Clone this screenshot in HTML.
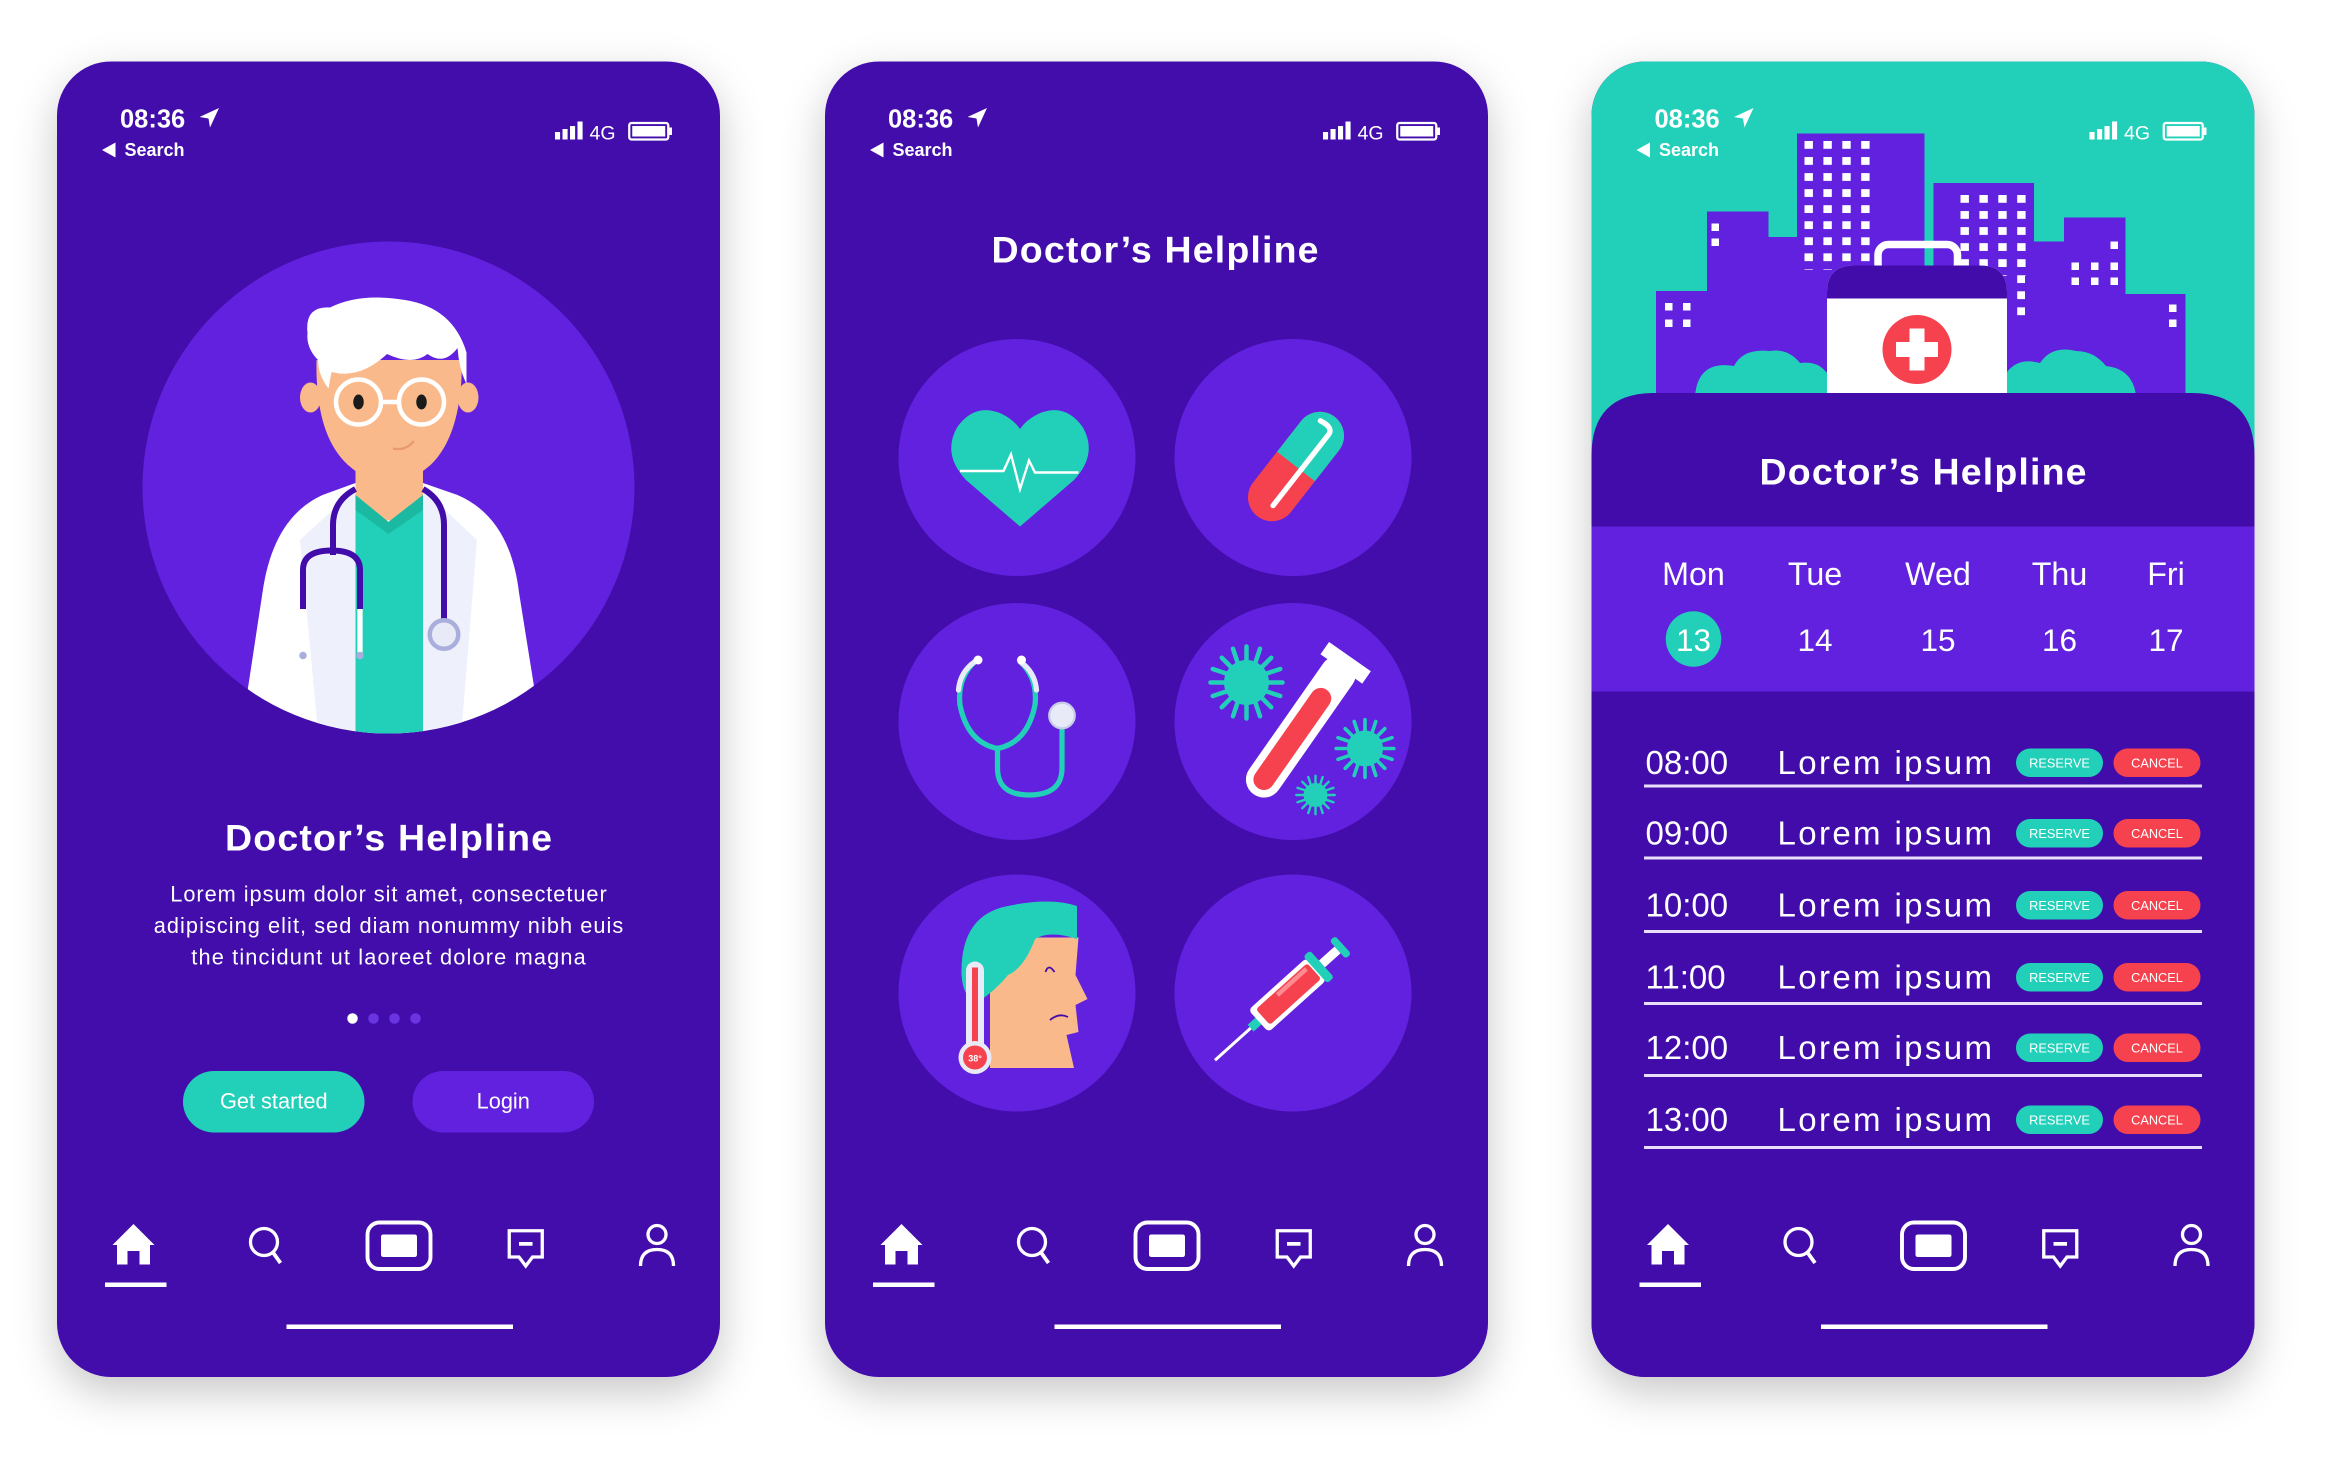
<!DOCTYPE html>
<html><head><meta charset="utf-8"><style>html,body{margin:0;padding:0;background:#fff}svg{display:block}</style></head>
<body>
<svg width="2352" height="1472" viewBox="0 0 1568 981.33" xmlns="http://www.w3.org/2000/svg" font-family="'Liberation Sans', 'DejaVu Sans', sans-serif">
<defs>
<filter id="sh" x="-20%" y="-20%" width="140%" height="140%"><feDropShadow dx="0" dy="10" stdDeviation="14" flood-color="#000" flood-opacity="0.22"/></filter>
<clipPath id="c1"><circle cx="259" cy="325" r="164"/></clipPath>
<clipPath id="p3"><rect x="1061" y="41" width="442" height="877" rx="36"/></clipPath>
<pattern id="win" x="1203" y="94" width="12.6" height="10.7" patternUnits="userSpaceOnUse"><rect width="5.6" height="5.2" fill="#fff"/></pattern>
<pattern id="win2" x="1307" y="130" width="12.6" height="10.7" patternUnits="userSpaceOnUse"><rect width="5.6" height="5.2" fill="#fff"/></pattern>
<g id="status">
<text x="80" y="85" font-size="17" font-weight="bold" fill="#fff">08:36</text>
<path d="M146 72 L133 78 L139 79 L140 85 Z" fill="#fff"/>
<path d="M68 100 L77 95 L77 105 Z" fill="#fff"/>
<text x="83" y="104" font-size="12" font-weight="bold" fill="#fff">Search</text>
<rect x="370" y="88" width="3.4" height="5" fill="#fff"/><rect x="375" y="86" width="3.4" height="7" fill="#fff"/><rect x="380" y="84" width="3.4" height="9" fill="#fff"/><rect x="385" y="81" width="3.4" height="12" fill="#fff"/>
<text x="393" y="93" font-size="13" fill="#fff">4G</text>
<rect x="419.5" y="82" width="26" height="11" rx="1.5" fill="none" stroke="#fff" stroke-width="1.5"/>
<rect x="421.5" y="84" width="22" height="7" fill="#fff"/><rect x="446" y="85" width="2" height="5" fill="#fff"/>
</g>
<g id="nav" fill="none" stroke="#fff">
<path d="M75 830 L89 816 L103 830 Z" fill="#fff" stroke="none"/>
<path d="M78 829 H100 V843 H93 V834 H85 V843 H78 Z" fill="#fff" stroke="none"/>
<rect x="70" y="855" width="41" height="3" fill="#fff" stroke="none"/>
<circle cx="176" cy="828" r="9" stroke-width="2.2"/>
<path d="M182 835 L187 842" stroke-width="2.5"/>
<rect x="245" y="815" width="42" height="31" rx="8" stroke-width="2.6"/>
<rect x="254" y="823" width="24" height="15" rx="1.5" fill="#fff" stroke="none"/>
<path d="M339.5 820.5 H361.5 V838 H355 L350.5 844 L346 838 H339.5 Z" stroke-width="2.2"/>
<rect x="346" y="828" width="9" height="2.5" fill="#fff" stroke="none"/>
<circle cx="438" cy="823" r="6" stroke-width="2.2"/>
<path d="M427 844 Q427 833 438 833 Q449 833 449 844" stroke-width="2.2"/>
<rect x="191" y="883" width="151" height="3" fill="#fff" stroke="none"/>
</g>
<g id="virus">
<circle r="10" fill="#22D0B9"/>
<g stroke="#22D0B9" stroke-width="2" stroke-linecap="round">
<path d="M0 -10 V-16 M0 10 V16 M-10 0 H-16 M10 0 H16 M7 7 L11 11 M-7 -7 L-11 -11 M7 -7 L11 -11 M-7 7 L-11 11"/>
<path d="M4 -9 L6 -15 M-4 9 L-6 15 M9 4 L15 6 M-9 -4 L-15 -6 M-4 -9 L-6 -15 M4 9 L6 15 M9 -4 L15 -6 M-9 4 L-15 6"/>
</g>
</g>
</defs>

<!-- phones -->
<rect x="38" y="41" width="442" height="877" rx="36" fill="#420CAA" filter="url(#sh)"/>
<rect x="550" y="41" width="442" height="877" rx="36" fill="#420CAA" filter="url(#sh)"/>
<rect x="1061" y="41" width="442" height="877" rx="36" fill="#420CAA" filter="url(#sh)"/>

<!-- PHONE 1 -->
<use href="#status"/>
<circle cx="259" cy="325" r="164" fill="#6221DE"/>
<g clip-path="url(#c1)">
 <path d="M156 520 L175 395 Q182 345 215 330 L237 322 H282 L305 330 Q340 345 346 395 L366 520 Z" fill="#fff"/>
 <path d="M200 360 L237 326 V520 H215 Z" fill="#EEF1FB"/>
 <path d="M318 360 L282 326 V520 H305 Z" fill="#EEF1FB"/>
 <rect x="237" y="307" width="45" height="40" fill="#F9B98A"/>
 <path d="M237 330 L259 348 L282 330 V500 H237 Z" fill="#22D0B9"/>
 <path d="M237 330 L259 348 L282 330 V340 L259 356 L237 340 Z" fill="#1BB8A2"/>
 <ellipse cx="207" cy="265" rx="7" ry="10" fill="#F9B98A"/>
 <ellipse cx="312" cy="265" rx="7" ry="10" fill="#F9B98A"/>
 <path d="M211 240 Q210 290 232 310 Q247 323 259 323 Q272 323 287 310 Q308 290 308 240 Z" fill="#F9B98A"/>
 <path d="M205 222 Q203 204 220 205 Q240 195 270 200 Q302 205 311 235 L311 256 Q306 246 305 232 Q296 244 285 236 Q275 244 258 236 Q240 253 221 248 L219 259 Q212 250 212 240 Q204 232 205 222 Z" fill="#fff"/>
 <circle cx="239" cy="268" r="15" fill="none" stroke="#fff" stroke-width="3"/>
 <circle cx="281" cy="268" r="15" fill="none" stroke="#fff" stroke-width="3"/>
 <path d="M254 268 H266" stroke="#fff" stroke-width="3"/>
 <ellipse cx="239" cy="268" rx="3.5" ry="5" fill="#1a1a1a"/>
 <ellipse cx="281" cy="268" rx="3.5" ry="5" fill="#1a1a1a"/>
 <path d="M262 299 Q270 301 276 294" fill="none" stroke="#E89A6E" stroke-width="1.5"/>
 <path d="M237 326 Q222 334 222 350 V370" fill="none" stroke="#420CAA" stroke-width="4"/>
 <path d="M202 406 V380 Q202 367 221 367 Q240 367 240 380 V406" fill="none" stroke="#420CAA" stroke-width="4"/>
 <path d="M202 406 V435 M240 406 V435" stroke="#fff" stroke-width="3.5"/>
 <circle cx="202" cy="437" r="2.5" fill="#A9AEDC"/><circle cx="240" cy="437" r="2.5" fill="#A9AEDC"/>
 <path d="M282 326 Q296 334 296 350 V414" fill="none" stroke="#420CAA" stroke-width="4"/>
 <circle cx="296" cy="423" r="9.5" fill="#E8EAF8" stroke="#A9AEDC" stroke-width="3"/>
</g>
<text x="259" y="567" text-anchor="middle" font-size="25" font-weight="bold" fill="#fff" textLength="218">Doctor’s Helpline</text>
<text x="259" y="601" text-anchor="middle" font-size="14.5" fill="#fff" textLength="291">Lorem ipsum dolor sit amet, consectetuer</text>
<text x="259" y="622" text-anchor="middle" font-size="14.5" fill="#fff" textLength="313">adipiscing elit, sed diam nonummy nibh euis</text>
<text x="259" y="643" text-anchor="middle" font-size="14.5" fill="#fff" textLength="263">the tincidunt ut laoreet dolore magna</text>
<circle cx="235" cy="679" r="3.5" fill="#fff"/><circle cx="249" cy="679" r="3.5" fill="#6A35E0"/><circle cx="263" cy="679" r="3.5" fill="#6A35E0"/><circle cx="277" cy="679" r="3.5" fill="#6A35E0"/>
<rect x="122" y="714" width="121" height="41" rx="20.5" fill="#22D0B9"/>
<text x="182.5" y="739" text-anchor="middle" font-size="14.5" fill="#fff">Get started</text>
<rect x="275" y="714" width="121" height="41" rx="20.5" fill="#6221DE"/>
<text x="335.5" y="739" text-anchor="middle" font-size="14.5" fill="#fff">Login</text>
<use href="#nav"/>

<!-- PHONE 2 -->
<use href="#status" x="512"/>
<text x="770" y="175" text-anchor="middle" font-size="25" font-weight="bold" fill="#fff" textLength="218">Doctor’s Helpline</text>
<g fill="#6221DE">
<circle cx="678" cy="305" r="79"/><circle cx="862" cy="305" r="79"/>
<circle cx="678" cy="481" r="79"/><circle cx="862" cy="481" r="79"/>
<circle cx="678" cy="662" r="79"/><circle cx="862" cy="662" r="79"/>
</g>
<!-- heart -->
<path d="M680 351 L644 320 Q628 303 638 285 Q650 268 668 276 Q676 280 680 286 Q684 280 692 276 Q710 268 722 285 Q732 303 716 320 Z" fill="#22D0B9"/>
<path d="M640 314 H669 L674 303 L680 326 L686 307 L690 315 H719" fill="none" stroke="#fff" stroke-width="1.6"/>
<!-- pill -->
<g transform="translate(864 311) rotate(-52)">
<rect x="-42" y="-16" width="84" height="32" rx="16" fill="#F5424E"/>
<path d="M0 -16 H26 A16 16 0 0 1 26 16 H0 Z" fill="#22D0B9"/>
<path d="M-30 4 H30 Q36 4 34 -6" fill="none" stroke="#fff" stroke-width="3.5" stroke-linecap="round"/>
</g>
<!-- stethoscope -->
<g fill="none" stroke-linecap="round">
<path d="M650 441 Q638 452 640 470 Q645 495 665 499 Q685 495 690 470 Q692 452 680 441" stroke="#22D0B9" stroke-width="3.5"/>
<path d="M650 441 Q640 448 639 460 M680 441 Q690 448 691 460" stroke="#E8EAF8" stroke-width="3.5"/>
<path d="M665 499 V512 Q665 530 686 530 Q708 530 708 512 V484" stroke="#22D0B9" stroke-width="3.5"/>
</g>
<circle cx="652" cy="440" r="3" fill="#fff"/><circle cx="681" cy="440" r="3" fill="#fff"/>
<circle cx="708" cy="477" r="8.5" fill="#E8EAF8" stroke="#C9CCE8" stroke-width="1.5"/>
<!-- test tube -->
<use href="#virus" transform="translate(831 455) scale(1.5)"/>
<use href="#virus" transform="translate(910 499) scale(1.2)"/>
<use href="#virus" transform="translate(877 530) scale(0.8)"/>
<g transform="translate(869 482) rotate(-55)">
<rect x="-58" y="-12" width="110" height="24" rx="12" fill="#fff"/>
<rect x="-53" y="-7" width="80" height="14" rx="7" fill="#F5424E"/>
<rect x="44" y="-17" width="10" height="34" fill="#fff"/>
</g>
<!-- head -->
<path d="M672 625 H719 L717 650 L725 666 L717 670 L719 688 L711 690 L716 712 H660 L660 640 Z" fill="#F9B98A"/>
<path d="M641 650 Q640 610 672 604 Q700 598 718 604 L718 626 Q700 620 690 626 Q683 645 672 650 Q664 660 652 668 Q642 666 641 650 Z" fill="#22D0B9"/>
<path d="M697 648 Q699 642 703 648" fill="none" stroke="#420CAA" stroke-width="1.2"/>
<path d="M700 680 Q706 675 712 678" fill="none" stroke="#420CAA" stroke-width="1.2"/>
<rect x="644" y="641" width="12" height="62" rx="6" fill="#E8EAF8"/>
<rect x="648" y="645" width="4" height="55" fill="#F5424E"/>
<circle cx="650" cy="705" r="11" fill="#E8EAF8"/><circle cx="650" cy="705" r="8" fill="#F5424E"/>
<text x="650" y="707.5" text-anchor="middle" font-size="6" font-weight="bold" fill="#fff">38°</text>
<!-- syringe -->
<g transform="translate(862 660) rotate(-42)">
<path d="M-70 0 H-36" stroke="#fff" stroke-width="2"/>
<rect x="-38" y="-3" width="8" height="6" fill="#22D0B9"/>
<rect x="-31" y="-10" width="52" height="20" rx="3" fill="#fff"/>
<rect x="-27" y="-7" width="46" height="14" rx="2" fill="#F5424E"/>
<rect x="-10" y="-6" width="26" height="3" fill="#FF8A92"/>
<rect x="20" y="-12" width="6" height="24" rx="2" fill="#22D0B9"/>
<rect x="26" y="-3" width="14" height="6" fill="#fff"/>
<rect x="40" y="-8" width="5" height="16" rx="2" fill="#22D0B9"/>
</g>
<use href="#nav" x="512"/>

<!-- PHONE 3 -->
<g clip-path="url(#p3)">
<rect x="1061" y="41" width="442" height="300" fill="#22D0B9"/>
<g fill="#6221DE">
<rect x="1104" y="194" width="40" height="80"/>
<rect x="1138" y="141" width="41" height="130"/>
<rect x="1179" y="158" width="22" height="110"/>
<rect x="1198" y="89" width="85" height="180"/>
<rect x="1289" y="122" width="67" height="150"/>
<rect x="1356" y="161" width="22" height="110"/>
<rect x="1376" y="145" width="41" height="130"/>
<rect x="1417" y="196" width="40" height="80"/>
</g>
<rect x="1203" y="94" width="50" height="86" fill="url(#win)"/>
<rect x="1307" y="130" width="50" height="54" fill="url(#win2)"/>
<rect x="1344" y="184" width="6" height="30" fill="url(#win2)"/>
<g fill="#fff">
<rect x="1141" y="149" width="5" height="5"/><rect x="1141" y="159" width="5" height="5"/>
<rect x="1110" y="202" width="5" height="5"/><rect x="1122" y="202" width="5" height="5"/><rect x="1110" y="213" width="5" height="5"/><rect x="1122" y="213" width="5" height="5"/>
<rect x="1407" y="161" width="5" height="5"/>
<rect x="1381" y="175" width="5" height="5"/><rect x="1394" y="175" width="5" height="5"/><rect x="1407" y="175" width="5" height="5"/>
<rect x="1381" y="185" width="5" height="5"/><rect x="1394" y="185" width="5" height="5"/><rect x="1407" y="185" width="5" height="5"/>
<rect x="1446" y="203" width="5" height="5"/><rect x="1446" y="213" width="5" height="5"/>
</g>
<path d="M1130 264 Q1132 240 1156 244 Q1162 232 1180 234 Q1192 232 1200 242 Q1214 240 1220 252 V264 Z" fill="#22D0B9"/>
<path d="M1338 264 V248 Q1346 238 1360 242 Q1368 230 1384 234 Q1396 234 1404 244 Q1422 246 1424 264 Z" fill="#22D0B9"/>
<rect x="1252" y="163" width="53" height="20" rx="7" fill="none" stroke="#fff" stroke-width="5"/>
<path d="M1218 264 V195 Q1218 177 1236 177 H1320 Q1338 177 1338 195 V264 Z" fill="#fff"/>
<path d="M1218 199 V195 Q1218 177 1236 177 H1320 Q1338 177 1338 195 V199 Z" fill="#420CAA"/>
<circle cx="1278" cy="233" r="23" fill="#F5424E"/>
<path d="M1273 219 H1283 V228 H1292 V238 H1283 V247 H1273 V238 H1264 V228 H1273 Z" fill="#fff"/>
<path d="M1061 304 Q1061 262 1103 262 H1461 Q1503 262 1503 304 V918 H1061 Z" fill="#420CAA"/>
</g>
<use href="#status" x="1023"/>
<text x="1282" y="323" text-anchor="middle" font-size="25" font-weight="bold" fill="#fff" textLength="218">Doctor’s Helpline</text>
<rect x="1061" y="351" width="442" height="110" fill="#6221DE"/>
<g font-size="21.5" fill="#fff" text-anchor="middle">
<text x="1129" y="390">Mon</text><text x="1210" y="390">Tue</text><text x="1292" y="390">Wed</text><text x="1373" y="390">Thu</text><text x="1444" y="390">Fri</text>
</g>
<circle cx="1129" cy="426" r="18.5" fill="#22D0B9"/>
<g font-size="21" fill="#fff" text-anchor="middle">
<text x="1129" y="434">13</text><text x="1210" y="434">14</text><text x="1292" y="434">15</text><text x="1373" y="434">16</text><text x="1444" y="434">17</text>
</g>
<g id="row">
<text x="1097" y="516" font-size="22" fill="#fff">08:00</text>
<text x="1185" y="516" font-size="22" fill="#fff" textLength="143">Lorem ipsum</text>
<rect x="1344" y="499" width="58" height="19" rx="9.5" fill="#22D0B9"/>
<text x="1373" y="511.5" text-anchor="middle" font-size="8.5" fill="#fff">RESERVE</text>
<rect x="1409" y="499" width="58" height="19" rx="9.5" fill="#F5424E"/>
<text x="1438" y="511.5" text-anchor="middle" font-size="8.5" fill="#fff">CANCEL</text>
<rect x="1096" y="523" width="372" height="2" fill="#E8E0FA"/>
</g>
<g transform="translate(0 47)">
<text x="1097" y="516" font-size="22" fill="#fff">09:00</text>
<text x="1185" y="516" font-size="22" fill="#fff" textLength="143">Lorem ipsum</text>
<rect x="1344" y="499" width="58" height="19" rx="9.5" fill="#22D0B9"/><text x="1373" y="511.5" text-anchor="middle" font-size="8.5" fill="#fff">RESERVE</text>
<rect x="1409" y="499" width="58" height="19" rx="9.5" fill="#F5424E"/><text x="1438" y="511.5" text-anchor="middle" font-size="8.5" fill="#fff">CANCEL</text>
<rect x="1096" y="524" width="372" height="2" fill="#E8E0FA"/>
</g>
<g transform="translate(0 95)">
<text x="1097" y="516" font-size="22" fill="#fff">10:00</text>
<text x="1185" y="516" font-size="22" fill="#fff" textLength="143">Lorem ipsum</text>
<rect x="1344" y="499" width="58" height="19" rx="9.5" fill="#22D0B9"/><text x="1373" y="511.5" text-anchor="middle" font-size="8.5" fill="#fff">RESERVE</text>
<rect x="1409" y="499" width="58" height="19" rx="9.5" fill="#F5424E"/><text x="1438" y="511.5" text-anchor="middle" font-size="8.5" fill="#fff">CANCEL</text>
<rect x="1096" y="525" width="372" height="2" fill="#E8E0FA"/>
</g>
<g transform="translate(0 143)">
<text x="1097" y="516" font-size="22" fill="#fff">11:00</text>
<text x="1185" y="516" font-size="22" fill="#fff" textLength="143">Lorem ipsum</text>
<rect x="1344" y="499" width="58" height="19" rx="9.5" fill="#22D0B9"/><text x="1373" y="511.5" text-anchor="middle" font-size="8.5" fill="#fff">RESERVE</text>
<rect x="1409" y="499" width="58" height="19" rx="9.5" fill="#F5424E"/><text x="1438" y="511.5" text-anchor="middle" font-size="8.5" fill="#fff">CANCEL</text>
<rect x="1096" y="525" width="372" height="2" fill="#E8E0FA"/>
</g>
<g transform="translate(0 190)">
<text x="1097" y="516" font-size="22" fill="#fff">12:00</text>
<text x="1185" y="516" font-size="22" fill="#fff" textLength="143">Lorem ipsum</text>
<rect x="1344" y="499" width="58" height="19" rx="9.5" fill="#22D0B9"/><text x="1373" y="511.5" text-anchor="middle" font-size="8.5" fill="#fff">RESERVE</text>
<rect x="1409" y="499" width="58" height="19" rx="9.5" fill="#F5424E"/><text x="1438" y="511.5" text-anchor="middle" font-size="8.5" fill="#fff">CANCEL</text>
<rect x="1096" y="526" width="372" height="2" fill="#E8E0FA"/>
</g>
<g transform="translate(0 238)">
<text x="1097" y="516" font-size="22" fill="#fff">13:00</text>
<text x="1185" y="516" font-size="22" fill="#fff" textLength="143">Lorem ipsum</text>
<rect x="1344" y="499" width="58" height="19" rx="9.5" fill="#22D0B9"/><text x="1373" y="511.5" text-anchor="middle" font-size="8.5" fill="#fff">RESERVE</text>
<rect x="1409" y="499" width="58" height="19" rx="9.5" fill="#F5424E"/><text x="1438" y="511.5" text-anchor="middle" font-size="8.5" fill="#fff">CANCEL</text>
<rect x="1096" y="526" width="372" height="2" fill="#E8E0FA"/>
</g>
<use href="#nav" x="1023"/>
</svg>
</body></html>
